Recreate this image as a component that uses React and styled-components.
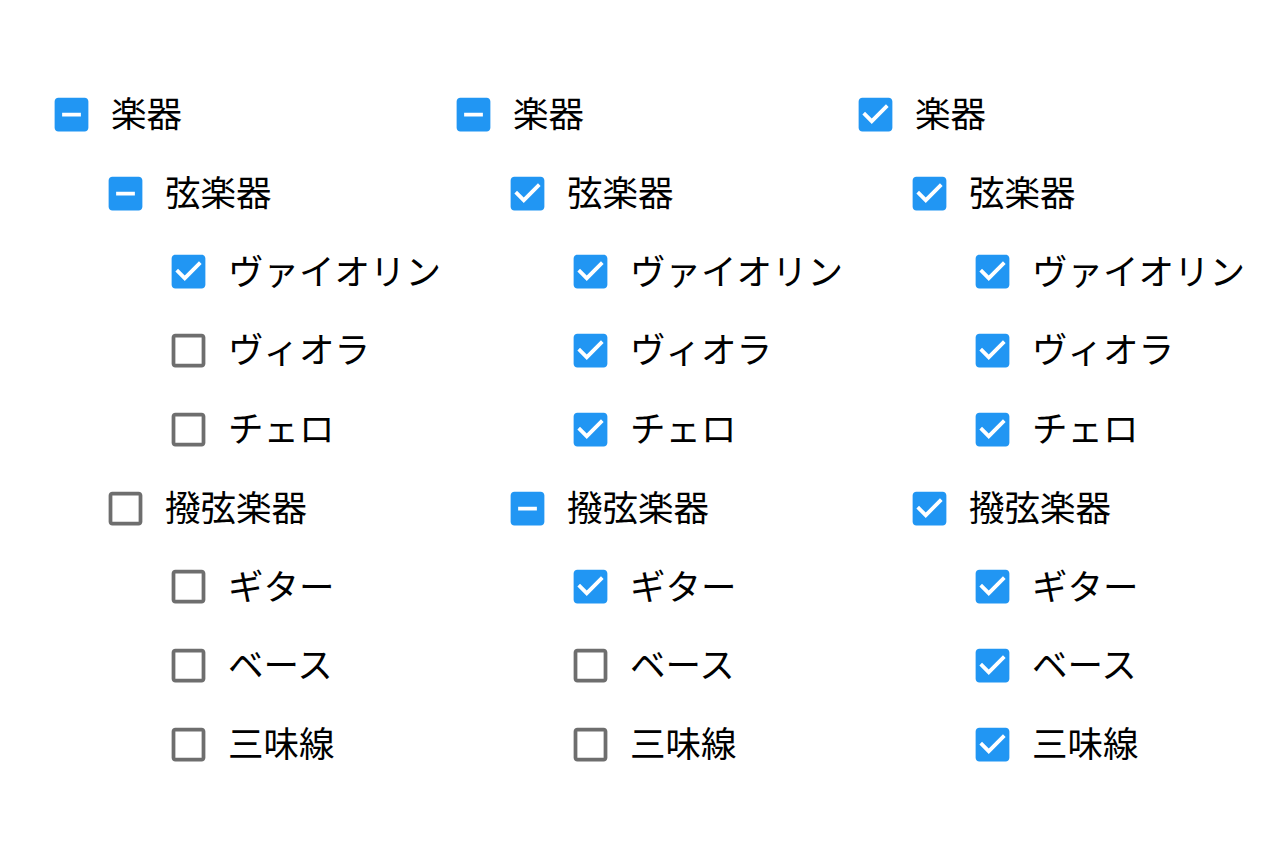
import React from "react";
import styled, { createGlobalStyle } from "styled-components";

const Global = createGlobalStyle`
  html, body { margin: 0; padding: 0; background: #fff; }
  body { font-family: "Noto Sans CJK JP", "Noto Sans", sans-serif; }
`;

const Page = styled.div`
  display: grid;
  grid-template-columns: repeat(3, 402px);
  padding: 75px 0 0 49px;
`;

const Column = styled.div`
  display: flex;
  flex-direction: column;
`;

const Row = styled.label`
  display: flex;
  align-items: center;
  height: 78.75px;
  padding-left: ${(p) => p.$indent}px;
`;

const Box = styled.svg`
  width: 45px;
  height: 45px;
  flex: none;
  fill: ${(p) => (p.$on ? "#2196f3" : "#6e6e6e")};
`;

const Label = styled.span`
  margin-left: 17px;
  padding-bottom: 5px;
  font-size: 35.5px;
  line-height: 1;
  color: #000;
  white-space: nowrap;
`;

const paths = {
  off: "M19 5v14H5V5h14m0-2H5c-1.11 0-2 .9-2 2v14c0 1.1.89 2 2 2h14c1.1 0 2-.9 2-2V5c0-1.1-.9-2-2-2z",
  on: "M19 3H5c-1.11 0-2 .9-2 2v14c0 1.1.89 2 2 2h14c1.11 0 2-.9 2-2V5c0-1.1-.89-2-2-2zm-9 14l-5-5 1.41-1.41L10 14.17l7.59-7.59L19 8l-9 9z",
  mid: "M19 3H5c-1.1 0-2 .9-2 2v14c0 1.1.9 2 2 2h14c1.1 0 2-.9 2-2V5c0-1.1-.9-2-2-2zm-2 10H7v-2h10v2z",
};

function Check({ state }) {
  return (
    <Box viewBox="0 0 24 24" $on={state !== "off"}>
      <path d={paths[state]} />
    </Box>
  );
}

const items = [
  ["楽器", 0],
  ["弦楽器", 54],
  ["ヴァイオリン", 117],
  ["ヴィオラ", 117],
  ["チェロ", 117],
  ["撥弦楽器", 54],
  ["ギター", 117],
  ["ベース", 117],
  ["三味線", 117],
];

const columns = [
  ["mid", "mid", "on", "off", "off", "off", "off", "off", "off"],
  ["mid", "on", "on", "on", "on", "mid", "on", "off", "off"],
  ["on", "on", "on", "on", "on", "on", "on", "on", "on"],
];

export default function App() {
  return (
    <>
      <Global />
      <Page>
        {columns.map((states, ci) => (
          <Column key={ci}>
            {items.map(([text, indent], i) => (
              <Row key={i} $indent={indent}>
                <Check state={states[i]} />
                <Label>{text}</Label>
              </Row>
            ))}
          </Column>
        ))}
      </Page>
    </>
  );
}
